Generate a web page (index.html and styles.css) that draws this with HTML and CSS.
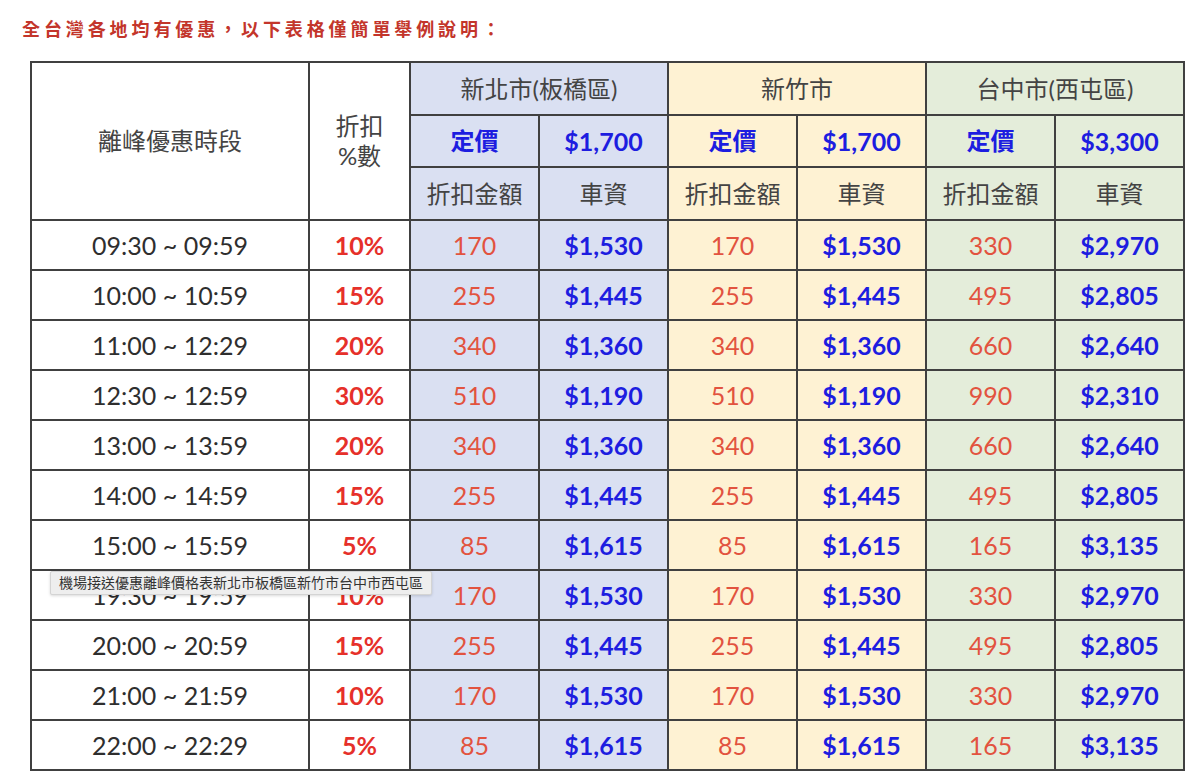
FILE: index.html
```html
<!DOCTYPE html>
<html lang="zh-TW">
<head>
    <meta charset="UTF-8">
    <title>機場接送優惠離峰價格表</title>
    <link rel="stylesheet" href="styles.css">
</head>
<body>
    <div class="page">
        <p class="intro">全台灣各地均有優惠，以下表格僅簡單舉例說明：</p>

        <!-- 離峰價格表 -->
        <table class="price">
            <colgroup>
                <col class="c-time"><col class="c-pct">
                <col class="c-val"><col class="c-val"><col class="c-val">
                <col class="c-val"><col class="c-val"><col class="c-val">
            </colgroup>
            <tr class="h1">
                <td rowspan="3" class="head">離峰優惠時段</td>
                <td rowspan="3" class="head two">折扣<br>%數</td>
                <td colspan="2" class="blue head">新北市(板橋區)</td>
                <td colspan="2" class="yellow head">新竹市</td>
                <td colspan="2" class="green head">台中市(西屯區)</td>
            </tr>
            <tr class="h2">
                <td class="blue fee">定價</td><td class="blue fee">$1,700</td>
                <td class="yellow fee">定價</td><td class="yellow fee">$1,700</td>
                <td class="green fee">定價</td><td class="green fee">$3,300</td>
            </tr>
            <tr class="h3">
                <td class="blue head">折扣金額</td><td class="blue head">車資</td>
                <td class="yellow head">折扣金額</td><td class="yellow head">車資</td>
                <td class="green head">折扣金額</td><td class="green head">車資</td>
            </tr>
            <tr><td class="time">09:30 ~ 09:59</td><td class="pct">10%</td><td class="blue off">170</td><td class="blue fee">$1,530</td><td class="yellow off">170</td><td class="yellow fee">$1,530</td><td class="green off">330</td><td class="green fee">$2,970</td></tr>
            <tr><td class="time">10:00 ~ 10:59</td><td class="pct">15%</td><td class="blue off">255</td><td class="blue fee">$1,445</td><td class="yellow off">255</td><td class="yellow fee">$1,445</td><td class="green off">495</td><td class="green fee">$2,805</td></tr>
            <tr><td class="time">11:00 ~ 12:29</td><td class="pct">20%</td><td class="blue off">340</td><td class="blue fee">$1,360</td><td class="yellow off">340</td><td class="yellow fee">$1,360</td><td class="green off">660</td><td class="green fee">$2,640</td></tr>
            <tr><td class="time">12:30 ~ 12:59</td><td class="pct">30%</td><td class="blue off">510</td><td class="blue fee">$1,190</td><td class="yellow off">510</td><td class="yellow fee">$1,190</td><td class="green off">990</td><td class="green fee">$2,310</td></tr>
            <tr><td class="time">13:00 ~ 13:59</td><td class="pct">20%</td><td class="blue off">340</td><td class="blue fee">$1,360</td><td class="yellow off">340</td><td class="yellow fee">$1,360</td><td class="green off">660</td><td class="green fee">$2,640</td></tr>
            <tr><td class="time">14:00 ~ 14:59</td><td class="pct">15%</td><td class="blue off">255</td><td class="blue fee">$1,445</td><td class="yellow off">255</td><td class="yellow fee">$1,445</td><td class="green off">495</td><td class="green fee">$2,805</td></tr>
            <tr><td class="time">15:00 ~ 15:59</td><td class="pct">5%</td><td class="blue off">85</td><td class="blue fee">$1,615</td><td class="yellow off">85</td><td class="yellow fee">$1,615</td><td class="green off">165</td><td class="green fee">$3,135</td></tr>
            <tr><td class="time">19:30 ~ 19:59</td><td class="pct">10%</td><td class="blue off">170</td><td class="blue fee">$1,530</td><td class="yellow off">170</td><td class="yellow fee">$1,530</td><td class="green off">330</td><td class="green fee">$2,970</td></tr>
            <tr><td class="time">20:00 ~ 20:59</td><td class="pct">15%</td><td class="blue off">255</td><td class="blue fee">$1,445</td><td class="yellow off">255</td><td class="yellow fee">$1,445</td><td class="green off">495</td><td class="green fee">$2,805</td></tr>
            <tr><td class="time">21:00 ~ 21:59</td><td class="pct">10%</td><td class="blue off">170</td><td class="blue fee">$1,530</td><td class="yellow off">170</td><td class="yellow fee">$1,530</td><td class="green off">330</td><td class="green fee">$2,970</td></tr>
            <tr><td class="time">22:00 ~ 22:29</td><td class="pct">5%</td><td class="blue off">85</td><td class="blue fee">$1,615</td><td class="yellow off">85</td><td class="yellow fee">$1,615</td><td class="green off">165</td><td class="green fee">$3,135</td></tr>
        </table>

        <div class="tip">機場接送優惠離峰價格表新北市板橋區新竹市台中市西屯區</div>
    </div>
</body>
</html>
```

FILE: styles.css
```css
/* 頁面 */
body {
    margin: 0;
    background: #fff;
    font-family: Lato, "Noto Sans CJK TC", sans-serif;
}
.page {
    position: relative;
    padding: 18px 0 0 22px;
}
.intro {
    margin: 0 0 20px 0;
    color: #c3352b;
    font-size: 18px;
    font-weight: bold;
    letter-spacing: 3.9px;
    line-height: 23px;
}

/* 表格 */
.price {
    margin-left: 8px;
    border-collapse: collapse;
    table-layout: fixed;
    width: 1153px;
    font-size: 24px;
    color: #333;
}
.c-time { width: 278px; }
.c-pct { width: 101px; }
.c-val { width: 129px; }
.price td {
    border: 2px solid #404040;
    padding: 0;
    height: 48px;
    text-align: center;
    line-height: 30px;
}
.price .h1 td { height: 51px; }
.price .h2 td { height: 50px; }
.price .h3 td { height: 51px; }
.head {
    color: #444;
}
.two {
    line-height: 30px;
}
.blue { background: #dae0f2; }
.yellow { background: #fef2d3; }
.green { background: #e4edda; }
.fee {
    color: #1d1de0;
    font-weight: bold;
    font-size: 25px;
}
.h2 .fee:nth-child(odd) { font-size: 24px; }
.time {
    color: #2e2e2e;
    font-size: 25px;
}
.pct {
    color: #e6302a;
    font-weight: bold;
    font-size: 25px;
}
.off {
    color: #e2533f;
    font-size: 25px;
}

/* 提示框 */
.tip {
    position: absolute;
    left: 50px;
    top: 571px;
    height: 22px;
    padding: 0 8px;
    background: #eeeeee;
    border: 1px solid #d4d4d4;
    border-radius: 2px;
    box-shadow: 0 1px 3px rgba(0, 0, 0, 0.15);
    color: #333;
    font-size: 14px;
    line-height: 22px;
}
```
